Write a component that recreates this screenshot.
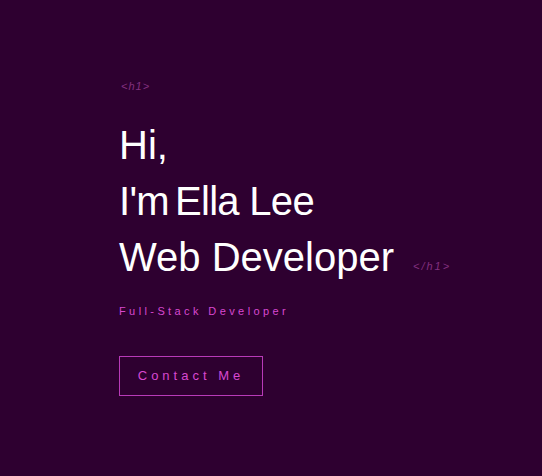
export default function App() {
  return (
    <div className="min-h-screen w-full bg-[#2e0030] font-['Liberation_Sans',Arial,sans-serif]">
      <div className="pl-[119px] pt-[79px]">
        <div className="text-[11px] italic tracking-[1px] text-[#83307f] leading-[14px] ml-[2px]">&lt;h1&gt;</div>
        <h1 className="mt-[24px] text-[40px] leading-[56px] text-white font-normal">
          <div>Hi,</div>
          <div className="tracking-[-0.7px]">
            <span className="mr-[6px]">I'm</span>Ella Lee
          </div>
          <div>
            Web Developer
            <span className="relative top-[-1px] ml-[19px] text-[11px] italic tracking-[2px] text-[#83307f]">&lt;/h1&gt;</span>
          </div>
        </h1>
        <p className="mt-[9px] text-[11px] tracking-[3.4px] text-[#d848d0] leading-[14px]">Full-Stack Developer</p>
        <button className="mt-[38px] w-[144px] h-[40px] border border-[#b83ab8] text-[13px] tracking-[4px] text-[#d848d0]">
          Contact Me
        </button>
      </div>
    </div>
  );
}
